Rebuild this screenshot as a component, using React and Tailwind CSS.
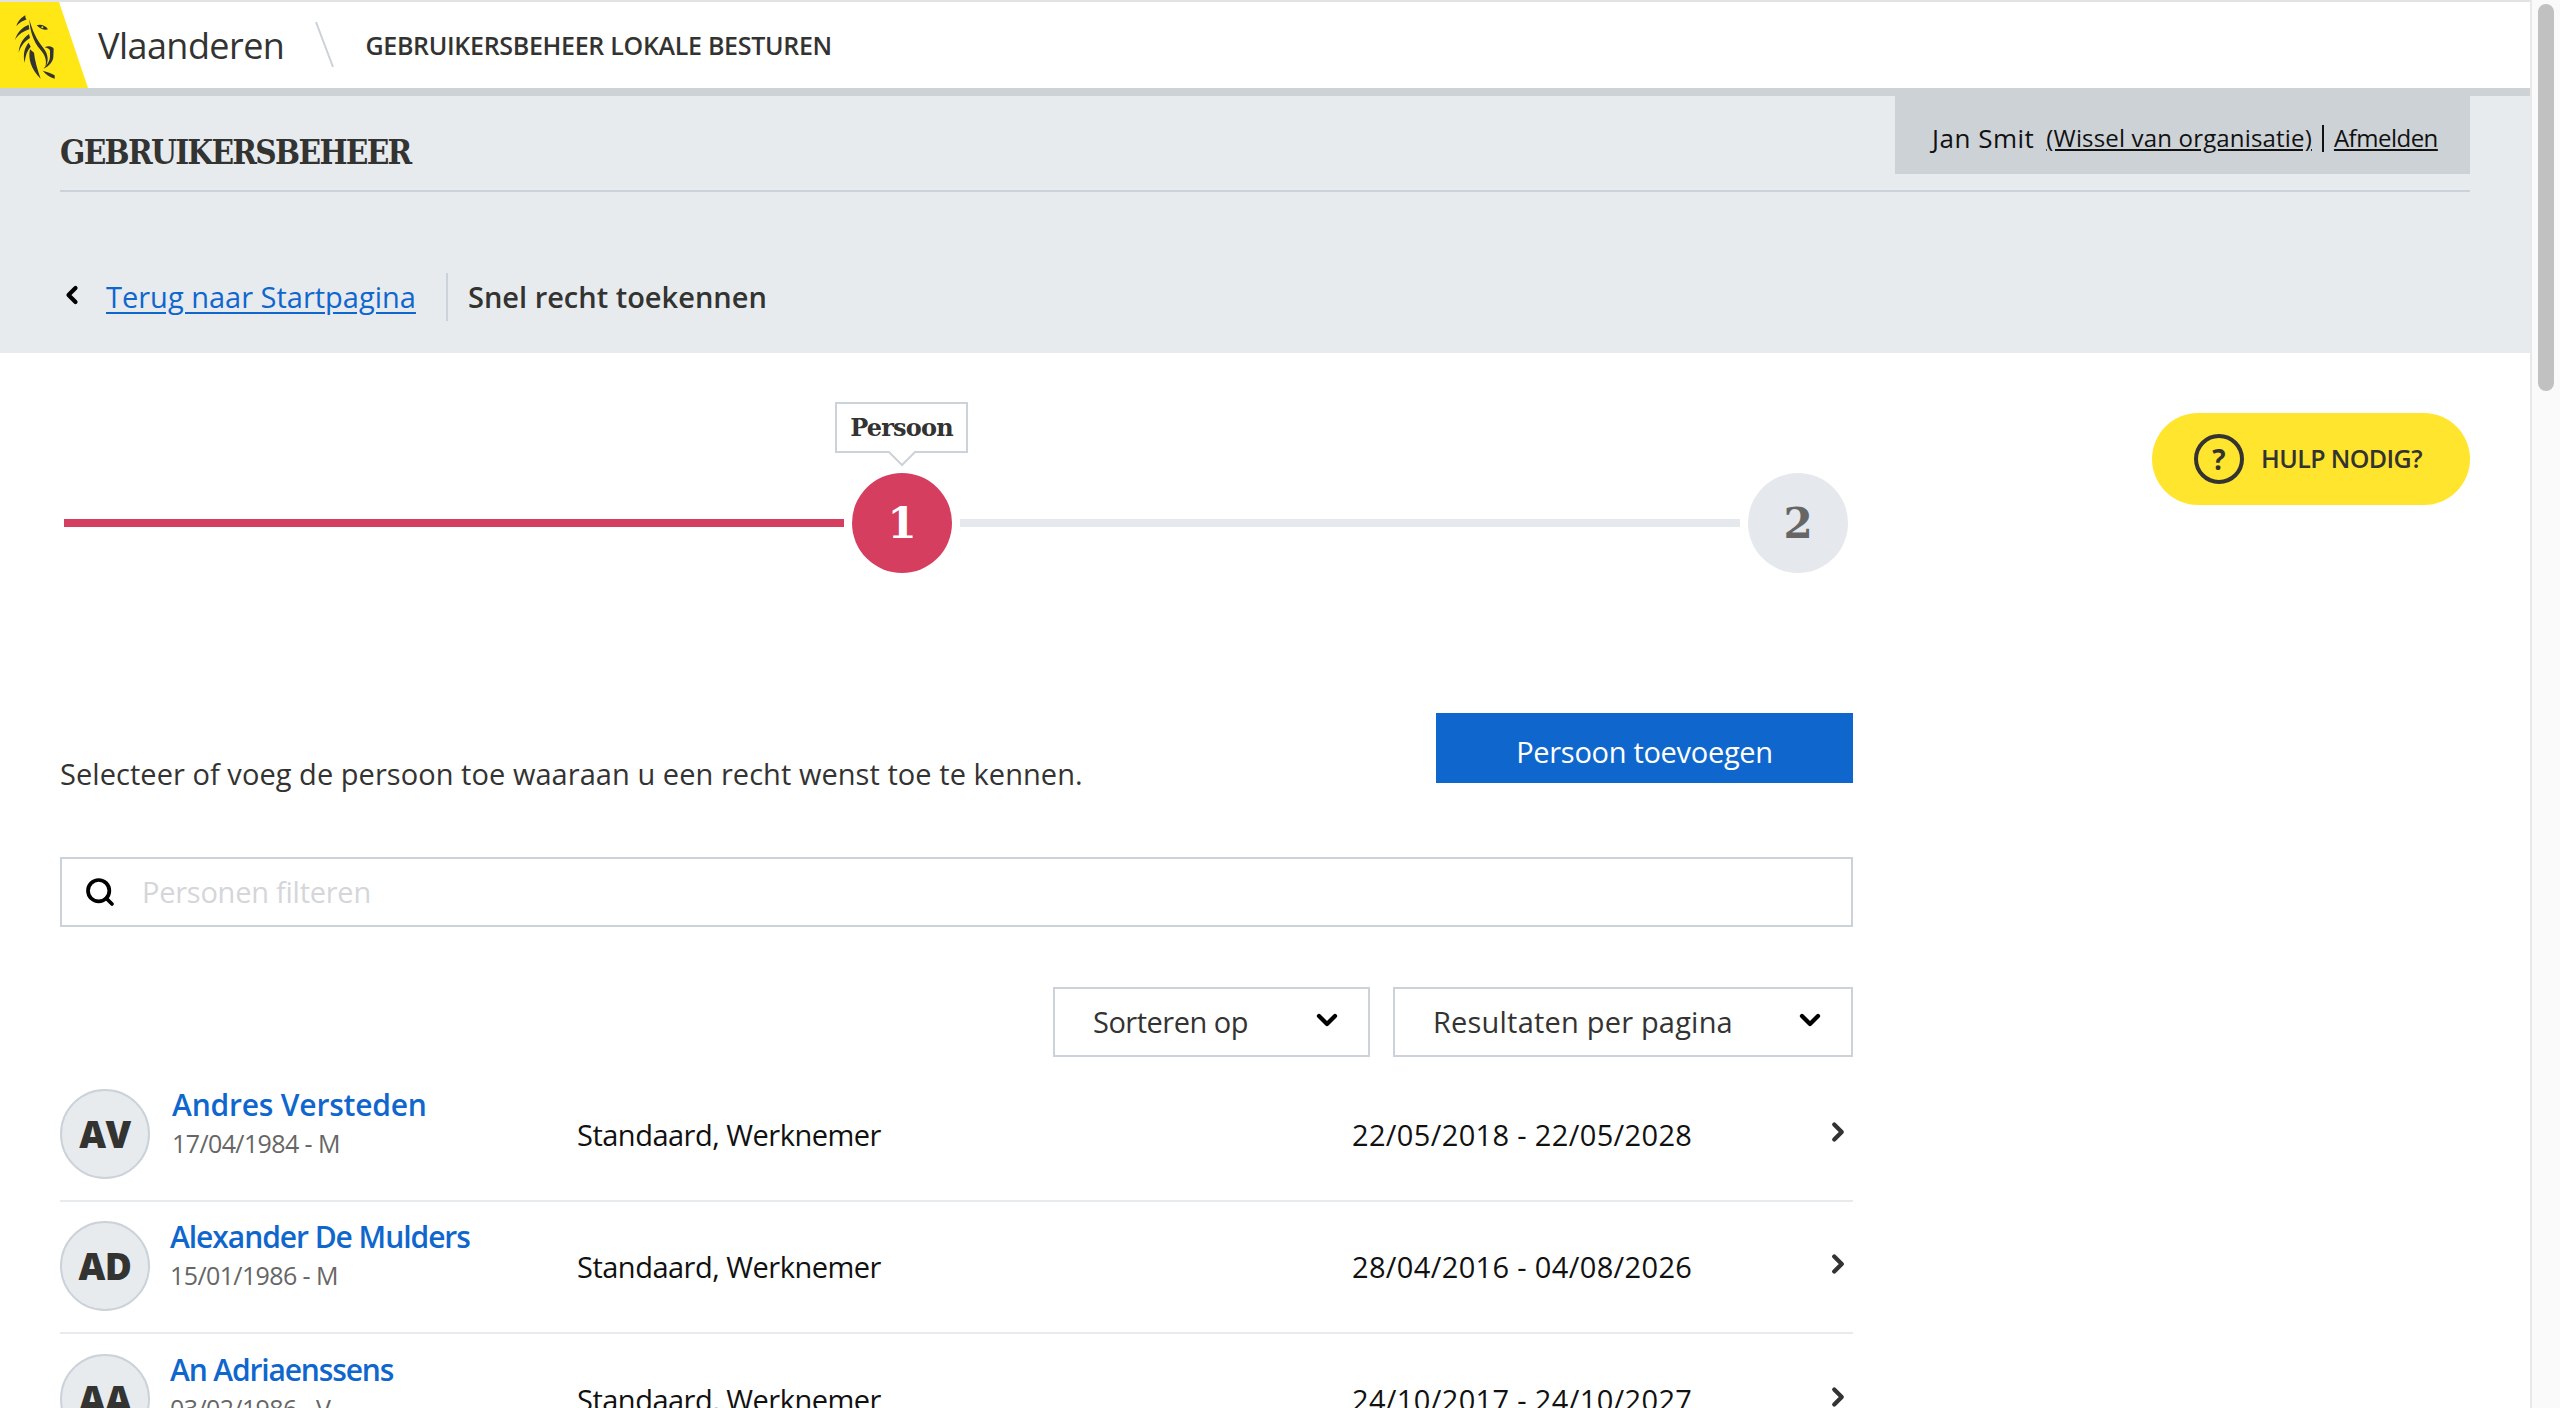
import { ChevronDown, ChevronLeft, ChevronRight, Search } from 'lucide-react';

const SANS = 'font-["Open_Sans",sans-serif]';

const PEOPLE = [
    { initials: 'AV', name: 'Andres Versteden', born: '17/04/1984 - M', period: '22/05/2018 - 22/05/2028', nameClass: 'pl-[22px]', nameTrack: 'tracking-[-0.2px]' },
    { initials: 'AD', name: 'Alexander De Mulders', born: '15/01/1986 - M', period: '28/04/2016 - 04/08/2026', nameClass: 'pl-[20px]', nameTrack: 'tracking-[-1.05px]' },
    { initials: 'AA', name: 'An Adriaenssens', born: '03/02/1986 - V', period: '24/10/2017 - 24/10/2027', nameClass: 'pl-[20px]', nameTrack: 'tracking-[-1.15px]' },
];

function Lion() {
    return (
        <svg width="50" height="70" viewBox="0 0 150 210" fill="#333332" className="absolute left-[10px] top-[8px]">
            <path d="M46 16 C36 22 24 32 19 48 C28 38 40 32 50 28 C46 26 46 22 46 16 Z" />
            <path d="M56 44 C40 50 22 64 15 90 C26 72 40 64 58 58 Z" />
            <path d="M57 72 C42 82 28 100 26 128 C32 108 44 94 60 84 Z" />
            <path d="M56 98 C44 112 38 132 44 158 C46 136 52 120 62 110 Z" />
            <path d="M58 28 C60 60 68 92 90 118 C104 134 112 150 106 172 C118 152 114 132 100 114 C80 90 66 60 58 28 Z" />
            <path d="M60 118 C54 145 62 178 92 206 C82 178 74 150 72 128 Z" />
            <path d="M80 46 C92 42 106 46 114 58 C106 62 92 58 80 46 Z" />
            <circle cx="97" cy="52" r="3" fill="#ffe615" />
            <path d="M104 112 C114 106 128 108 131 116 L130 140 C130 154 116 170 100 176 C112 164 120 152 120 140 L120 122 C118 116 112 114 104 112 Z" />
            <path d="M98 182 C112 186 124 190 134 196 L134 206 C120 202 108 194 98 182 Z" />
        </svg>
    );
}

function PersonRow({ person, last }) {
    return (
        <div className={`flex items-center h-[132px] pb-[2px] ${last ? '' : 'border-b-2 border-[#e8ebee]'}`}>
            <div className='flex items-center justify-center shrink-0 w-[90px] h-[90px] rounded-full bg-[#e8ebee] border-2 border-[#cbd2d9] text-[37px] font-extrabold tracking-[-0.5px] text-[#333332]'>
                {person.initials}
            </div>
            <div className={`w-[427px] shrink-0 -mt-[22px] ${person.nameClass}`}>
                <div className={`-mt-[2px] mb-[2px] text-[30px] leading-[39px] font-semibold text-[#0f67ce] ${person.nameTrack}`}>{person.name}</div>
                <div className="text-[25px] leading-[34px] tracking-[-0.6px] text-[#666]">{person.born}</div>
            </div>
            <div className="w-[775px] shrink-0 mt-[2px] text-[29px] tracking-[-0.5px] text-[#111]">Standaard, Werknemer</div>
            <div className="w-[471px] shrink-0 mt-[2px] text-[29px] tracking-[0.35px] text-[#111]">{person.period}</div>
            <ChevronRight size={32} strokeWidth={3.4} className="text-[#333332] -mt-[5px]" />
        </div>
    );
}

function Select({ label, width, textClass }) {
    return (
        <div className={`flex items-center justify-between h-[70px] border-2 border-[#cbd2d9] pl-[38px] pr-[25px] ${width}`}>
            <span className={`text-[29px] text-[#333332] ${textClass}`}>{label}</span>
            <ChevronDown size={32} strokeWidth={3.2} className="text-black -mt-[4px]" />
        </div>
    );
}

export default function App() {
    return (
        <div className={`${SANS} h-[1408px] overflow-hidden flex bg-white`}>
            <div className="w-[2530px] shrink-0">
                <div className="h-[2px] bg-[#e2e2e2]" />
                <header className="flex items-center h-[86px] bg-white">
                    <div className="relative w-[90px] h-[86px] shrink-0 bg-[#ffe615] [clip-path:polygon(0_0,59px_0,88px_100%,0_100%)]">
                        <Lion />
                    </div>
                    <div className="ml-[8px] mt-[2px] text-[36px] font-medium tracking-[-0.55px] text-[#333332]">Vlaanderen</div>
                    <svg width="20" height="48" viewBox="0 0 20 48" className="ml-[31px] shrink-0">
                        <line x1="1" y1="1" x2="18" y2="46" stroke="#cbd2d9" strokeWidth="2" />
                    </svg>
                    <div className="ml-[30px] mt-[2px] text-[25px] font-semibold tracking-[-0.3px] text-[#333332]">GEBRUIKERSBEHEER LOKALE BESTUREN</div>
                </header>
                <div className="h-[8px] bg-[#cdd2d6]" />

                <section className="h-[257px] bg-[#e8ebee] px-[60px]">
                    <div className="flex justify-between h-[96px] border-b-2 border-[#cbd2d9]">
                        <h1 className='pt-[37px] font-["DejaVu_Serif_Condensed","DejaVu_Serif",serif] text-[33px] leading-[40px] font-bold tracking-[-1.7px] text-[#333332]'>GEBRUIKERSBEHEER</h1>
                        <div className="flex items-center gap-[12px] w-[575px] h-[78px] pl-[37px] pt-[6px] bg-[#cdd2d6] text-[#111]">
                            <span className="text-[26px] tracking-[0.5px]">Jan Smit</span>
                            <span className="flex items-center gap-[10px] text-[24px] tracking-[0.17px]">
                                <a className="underline underline-offset-2">(Wissel van organisatie)</a>
                                <span className="w-[2px] h-[27px] bg-[#111]" />
                                <a className="underline underline-offset-2 tracking-[-0.5px]">Afmelden</a>
                            </span>
                        </div>
                    </div>
                    <div className="flex items-center mt-[81px] h-[48px]">
                        <ChevronLeft size={28} strokeWidth={3.6} className="text-black -ml-[2px] -mt-[4px]" />
                        <a className="ml-[20px] text-[29px] text-[#0f67ce] underline underline-offset-4">Terug naar Startpagina</a>
                        <div className="ml-[30px] w-[2px] h-[48px] bg-[#cbd2d9]" />
                        <div className="ml-[20px] text-[29px] font-semibold text-[#333332]">Snel recht toekennen</div>
                    </div>
                </section>

                <main className="flex justify-between px-[60px]">
                    <div className="w-[1793px]">
                        <div className="flex flex-col items-start pl-[4px] h-[270px]">
                            <div className="relative flex items-center w-[1784px] h-[100px] mt-[120px]">
                                <div className="w-[780px] h-[8px] bg-[#d63e60]" />
                                <div className='relative flex items-center justify-center shrink-0 w-[100px] h-[100px] ml-[8px] rounded-full bg-[#d63e60] font-["DejaVu_Serif",serif] text-[42px] font-bold text-white'>
                                    1
                                    <div className="absolute left-[-17px] top-[-71px] flex items-center justify-center w-[133px] h-[51px] border-2 border-[#cbd2d9] bg-white text-[24px] tracking-[-0.8px] text-[#333332]">
                                        Persoon
                                    </div>
                                    <svg width="30" height="16" viewBox="0 0 30 16" className="absolute left-[35px] top-[-22px]">
                                        <path d="M1 0 L15 14 L29 0" fill="#fff" stroke="#cbd2d9" strokeWidth="2" />
                                    </svg>
                                </div>
                                <div className="w-[780px] h-[8px] ml-[8px] bg-[#e5e8ec]" />
                                <div className='flex items-center justify-center shrink-0 w-[100px] h-[100px] ml-[8px] rounded-full bg-[#e5e8ec] font-["DejaVu_Serif",serif] text-[42px] font-bold text-[#666]'>
                                    2
                                </div>
                            </div>
                        </div>

                        <div className="flex justify-between items-start h-[144px] mt-[90px]">
                            <p className="mt-[39px] text-[29px] leading-[44px] tracking-[0.05px] text-[#333332]">Selecteer of voeg de persoon toe waaraan u een recht wenst toe te kennen.</p>
                            <button className="w-[417px] h-[70px] pt-[8px] bg-[#0f67ce] text-[29px] tracking-[-0.3px] text-white">Persoon toevoegen</button>
                        </div>

                        <div className="flex items-center h-[70px] border-2 border-[#cbd2d9] pl-[22px]">
                            <Search size={32} strokeWidth={2.8} className="text-black" />
                            <input placeholder="Personen filteren" className="ml-[26px] flex-1 text-[29px] tracking-[-0.25px] outline-none placeholder:text-[#d4d6d9]" />
                        </div>

                        <div className="flex justify-end gap-[23px] mt-[60px]">
                            <Select label="Sorteren op" width="w-[317px]" textClass="tracking-[-0.5px]" />
                            <Select label="Resultaten per pagina" width="w-[460px]" textClass="tracking-[0.2px]" />
                        </div>

                        <div className="mt-[13px]">
                            {PEOPLE.map((p, i) => <PersonRow key={p.initials} person={p} last={i === PEOPLE.length - 1} />)}
                        </div>
                    </div>

                    <div className="mt-[60px]">
                        <div className="flex items-center w-[318px] h-[92px] rounded-full bg-[#ffe52e] pl-[42px]">
                            <div className="flex items-center justify-center w-[50px] h-[50px] rounded-full border-4 border-[#333332] text-[28px] font-bold text-[#333332]">?</div>
                            <span className="ml-[17px] text-[25px] font-semibold tracking-[-0.6px] text-[#333332]">HULP NODIG?</span>
                        </div>
                    </div>
                </main>
            </div>

            <div className="w-[30px] shrink-0 bg-[#fafafa] border-l-2 border-[#e8e8e8] pt-[4px] pl-[6px]">
                <div className="w-[16px] h-[387px] rounded-full bg-[#c1c1c1]" />
            </div>
        </div>
    );
}
